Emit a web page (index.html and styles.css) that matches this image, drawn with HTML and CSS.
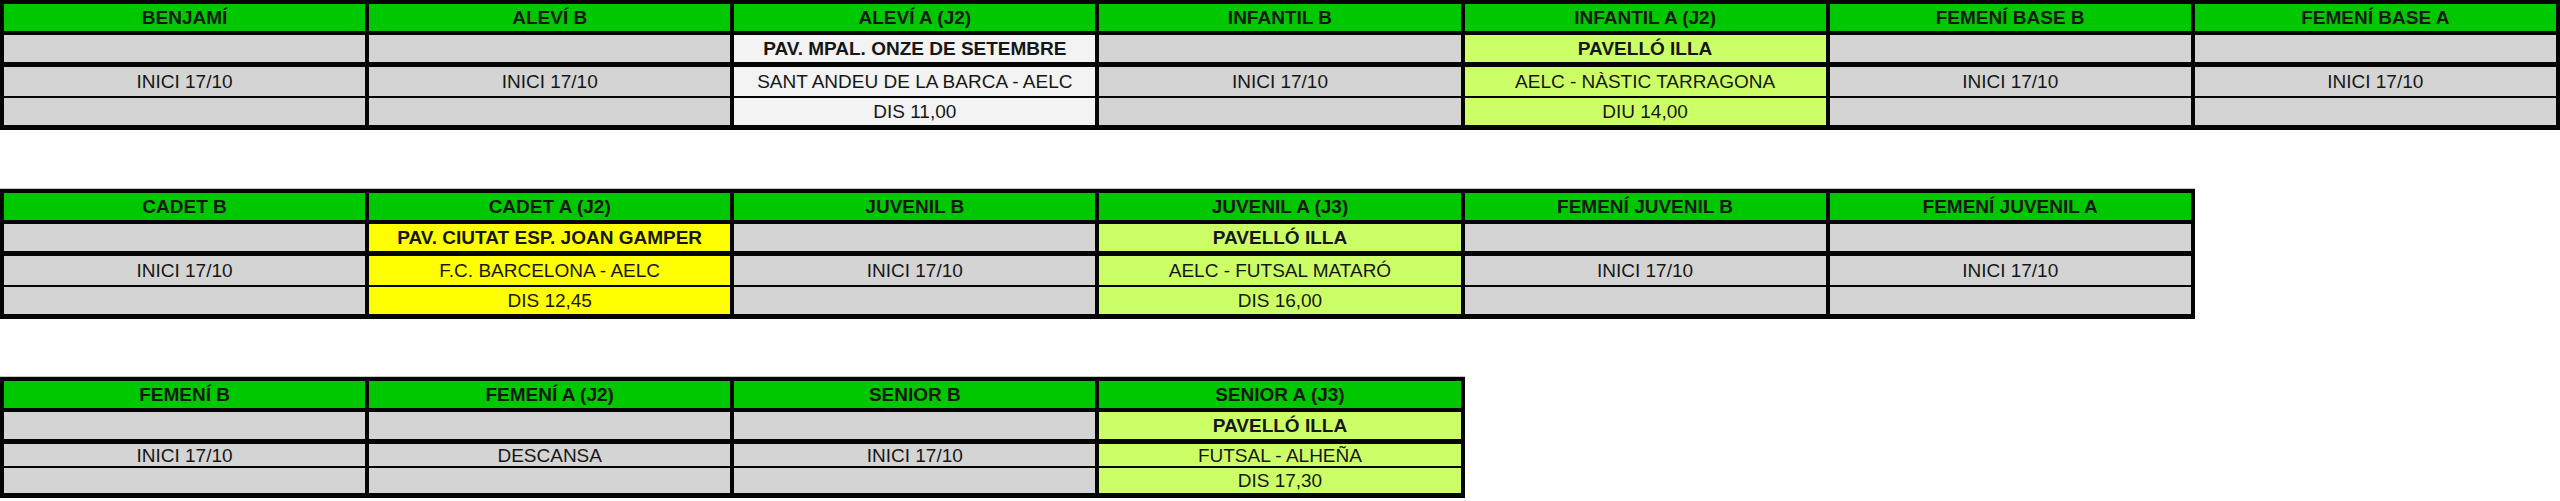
FILE: index.html
```html
<!DOCTYPE html>
<html lang="ca">
<head>
<meta charset="utf-8">
<title>Horaris</title>
<link rel="stylesheet" href="styles.css">
</head>
<body>
<div class="page">
  <div class="sheet t1">
    <div class="col">
      <div class="cell head">BENJAMÍ</div>
      <div class="cell r2 gray"></div>
      <div class="cell r3 gray">INICI 17/10</div>
      <div class="cell r4 gray"></div>
    </div>
    <div class="col">
      <div class="cell head">ALEVÍ B</div>
      <div class="cell r2 gray"></div>
      <div class="cell r3 gray">INICI 17/10</div>
      <div class="cell r4 gray"></div>
    </div>
    <div class="col">
      <div class="cell head">ALEVÍ A (J2)</div>
      <div class="cell r2 white bold">PAV. MPAL. ONZE DE SETEMBRE</div>
      <div class="cell r3 white">SANT ANDEU DE LA BARCA - AELC</div>
      <div class="cell r4 white">DIS 11,00</div>
    </div>
    <div class="col">
      <div class="cell head">INFANTIL B</div>
      <div class="cell r2 gray"></div>
      <div class="cell r3 gray">INICI 17/10</div>
      <div class="cell r4 gray"></div>
    </div>
    <div class="col">
      <div class="cell head">INFANTIL A (J2)</div>
      <div class="cell r2 lime bold">PAVELLÓ ILLA</div>
      <div class="cell r3 lime">AELC - NÀSTIC TARRAGONA</div>
      <div class="cell r4 lime">DIU 14,00</div>
    </div>
    <div class="col">
      <div class="cell head">FEMENÍ BASE B</div>
      <div class="cell r2 gray"></div>
      <div class="cell r3 gray">INICI 17/10</div>
      <div class="cell r4 gray"></div>
    </div>
    <div class="col">
      <div class="cell head">FEMENÍ BASE A</div>
      <div class="cell r2 gray"></div>
      <div class="cell r3 gray">INICI 17/10</div>
      <div class="cell r4 gray"></div>
    </div>
  </div>

  <div class="sheet t2">
    <div class="col">
      <div class="cell head">CADET B</div>
      <div class="cell r2 gray"></div>
      <div class="cell r3 gray">INICI 17/10</div>
      <div class="cell r4 gray"></div>
    </div>
    <div class="col">
      <div class="cell head">CADET A (J2)</div>
      <div class="cell r2 yellow bold">PAV. CIUTAT ESP. JOAN GAMPER</div>
      <div class="cell r3 yellow">F.C. BARCELONA - AELC</div>
      <div class="cell r4 yellow">DIS 12,45</div>
    </div>
    <div class="col">
      <div class="cell head">JUVENIL B</div>
      <div class="cell r2 gray"></div>
      <div class="cell r3 gray">INICI 17/10</div>
      <div class="cell r4 gray"></div>
    </div>
    <div class="col">
      <div class="cell head">JUVENIL A (J3)</div>
      <div class="cell r2 lime bold">PAVELLÓ ILLA</div>
      <div class="cell r3 lime">AELC - FUTSAL MATARÓ</div>
      <div class="cell r4 lime">DIS 16,00</div>
    </div>
    <div class="col">
      <div class="cell head">FEMENÍ JUVENIL B</div>
      <div class="cell r2 gray"></div>
      <div class="cell r3 gray">INICI 17/10</div>
      <div class="cell r4 gray"></div>
    </div>
    <div class="col">
      <div class="cell head">FEMENÍ JUVENIL A</div>
      <div class="cell r2 gray"></div>
      <div class="cell r3 gray">INICI 17/10</div>
      <div class="cell r4 gray"></div>
    </div>
  </div>

  <div class="sheet t3">
    <div class="col">
      <div class="cell head">FEMENÍ B</div>
      <div class="cell r2 gray"></div>
      <div class="cell r3 gray">INICI 17/10</div>
      <div class="cell r4 gray"></div>
    </div>
    <div class="col">
      <div class="cell head">FEMENÍ A (J2)</div>
      <div class="cell r2 gray"></div>
      <div class="cell r3 gray">DESCANSA</div>
      <div class="cell r4 gray"></div>
    </div>
    <div class="col">
      <div class="cell head">SENIOR B</div>
      <div class="cell r2 gray"></div>
      <div class="cell r3 gray">INICI 17/10</div>
      <div class="cell r4 gray"></div>
    </div>
    <div class="col">
      <div class="cell head">SENIOR A (J3)</div>
      <div class="cell r2 lime bold">PAVELLÓ ILLA</div>
      <div class="cell r3 lime">FUTSAL - ALHEÑA</div>
      <div class="cell r4 lime">DIS 17,30</div>
    </div>
  </div>
</div>
</body>
</html>
```

FILE: styles.css
```css
html, body {
  margin: 0;
  padding: 0;
  background: #ffffff;
}

body {
  width: 2560px;
  height: 501px;
  overflow: hidden;
  font-family: "Liberation Sans", Arial, sans-serif;
  color: #161616;
}

.page {
  display: flex;
  flex-direction: column;
  align-items: flex-start;
}

.sheet {
  display: flex;
  gap: 4px;
  background: #050505;
  padding: 4px 4px 5px 4px;
  box-shadow: 0 -1px 0 0 #c8c8c8;
}

.t2 {
  margin-top: 59px;
}

.t3 {
  margin-top: 58px;
}

.col {
  width: 361.14px;
  display: flex;
  flex-direction: column;
}

.cell {
  display: flex;
  align-items: center;
  justify-content: center;
  font-size: 19px;
  line-height: 1;
  white-space: nowrap;
}

.head {
  height: 27px;
  background: #00c800;
  font-weight: bold;
  font-size: 19px;
  color: #121a12;
}

.r2 {
  height: 27px;
  margin-top: 4px;
}

.r3 {
  height: 29px;
  margin-top: 5px;
}

.r4 {
  height: 27px;
  margin-top: 2px;
}

.t3 .r3 {
  height: 22px;
}

.t3 .r4 {
  height: 25px;
}

.bold {
  font-weight: bold;
  font-size: 19px;
}

.gray {
  background: #d4d4d4;
}

.white {
  background: #f3f3f3;
}

.lime {
  background: #ccff66;
}

.yellow {
  background: #ffff00;
}
```
